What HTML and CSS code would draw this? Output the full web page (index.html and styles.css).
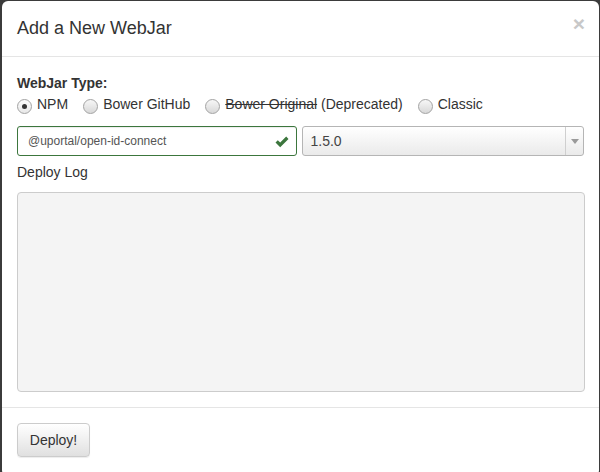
FILE: index.html
```html
<!DOCTYPE html>
<html>
<head>
<meta charset="utf-8">
<link rel="stylesheet" href="styles.css">
</head>
<body>
<div class="modal">
  <div class="modal-header">
    <h4 class="modal-title">Add a New WebJar</h4>
    <span class="close">×</span>
  </div>
  <div class="modal-body">
    <div class="type-label">WebJar Type:</div>
    <div class="radios">
      <label class="radio"><span class="circle checked"></span>NPM</label>
      <label class="radio"><span class="circle"></span>Bower GitHub</label>
      <label class="radio"><span class="circle"></span><s>Bower Original</s>&nbsp;(Deprecated)</label>
      <label class="radio"><span class="circle"></span>Classic</label>
    </div>
    <div class="inputs">
      <div class="name-input">
        <span class="name-text">@uportal/open-id-connect</span>
        <svg class="check" width="14" height="12" viewBox="0 0 14 12"><path d="M0.5 6.5 L2.8 4.2 L5.2 6.6 L11.2 0.6 L13.5 2.9 L5.2 11.2 Z" fill="#3c763d"/></svg>
      </div>
      <div class="select">
        <span class="select-text">1.5.0</span>
        <span class="select-arrow"><svg width="8" height="5" viewBox="0 0 8 5"><path d="M0 0 L8 0 L4 5 Z" fill="#9a9a9a"/></svg></span>
      </div>
    </div>
    <div class="log-label">Deploy Log</div>
    <div class="log"></div>
  </div>
  <div class="modal-footer">
    <button class="btn">Deploy!</button>
  </div>
</div>
</body>
</html>
```

FILE: styles.css
```css
html, body {
  margin: 0;
  padding: 0;
}
body {
  background: #3b3b3b;
  width: 600px;
  height: 472px;
  overflow: hidden;
  font-family: "Liberation Sans", Arial, sans-serif;
  font-size: 14px;
  color: #333;
}
.modal {
  margin: 1px 1px 0 2px;
  width: 597px;
  height: 475px;
  background: #fff;
  border-radius: 6px;
  box-sizing: border-box;
}
.modal-header {
  position: relative;
  padding: 15px;
  border-bottom: 1px solid #e5e5e5;
  height: 56px;
  box-sizing: border-box;
}
.modal-title {
  margin: 0;
  font-size: 18px;
  font-weight: normal;
  line-height: 25px;
  color: #333;
}
.close {
  position: absolute;
  right: 14px;
  top: 10px;
  font-size: 21px;
  font-weight: bold;
  color: #c8c8c8;
  line-height: 25px;
}
.modal-body {
  padding: 15px;
  height: 350px;
  box-sizing: border-box;
}
.type-label {
  font-weight: bold;
  line-height: 20px;
  margin-top: 1px;
}
.radios {
  display: flex;
  align-items: center;
  gap: 15px;
  height: 22px;
}
.radio {
  display: inline-flex;
  align-items: center;
  line-height: 20px;
}
.circle {
  width: 13px;
  height: 13px;
  border: 1px solid #a3a3a3;
  border-radius: 50%;
  background: linear-gradient(#f7f7f7, #d8d8d8);
  margin-right: 5px;
  margin-top: 5px;
  position: relative;
  flex: none;
}
.circle.checked {
  background: linear-gradient(#fbfbfb, #e8e8e8);
}
.circle.checked::after {
  content: "";
  position: absolute;
  left: 4px;
  top: 4px;
  width: 5px;
  height: 5px;
  border-radius: 50%;
  background: #333;
}
.inputs {
  display: flex;
  gap: 5px;
  margin-top: 11px;
}
.name-input {
  width: 280px;
  height: 30px;
  box-sizing: border-box;
  border: 1px solid #3c763d;
  border-radius: 3px;
  display: flex;
  align-items: center;
  justify-content: space-between;
  padding: 0 7px 0 10px;
  box-shadow: inset 0 1px 1px rgba(0,0,0,.075);
}
.name-text {
  font-size: 12px;
  color: #555;
}
.check {
  margin-top: 1px;
}
.select {
  width: 283px;
  height: 30px;
  box-sizing: border-box;
  border: 1px solid #b5b5b5;
  border-radius: 3px;
  background: linear-gradient(#fff, #eaeaea);
  display: flex;
  align-items: center;
  justify-content: space-between;
}
.select-text {
  padding-left: 8px;
  color: #444;
}
.select-arrow {
  width: 17px;
  height: 28px;
  border-left: 1px solid #cfcfcf;
  display: flex;
  align-items: center;
  justify-content: center;
}
.log-label {
  line-height: 20px;
  margin-top: 6px;
}
.log {
  margin-top: 10px;
  width: 568px;
  height: 200px;
  box-sizing: border-box;
  border: 1px solid #ccc;
  border-radius: 4px;
  background: #f4f4f4;
}
.modal-footer {
  border-top: 1px solid #e5e5e5;
  padding: 15px;
}
.btn {
  font-family: "Liberation Sans", Arial, sans-serif;
  font-size: 14px;
  color: #333;
  height: 34px;
  width: 73px;
  border: 1px solid #ccc;
  border-radius: 4px;
  background: linear-gradient(#fff, #e0e0e0);
  padding: 0;
  box-shadow: inset 0 1px 0 rgba(255,255,255,.15), 0 1px 1px rgba(0,0,0,.075);
}
```
